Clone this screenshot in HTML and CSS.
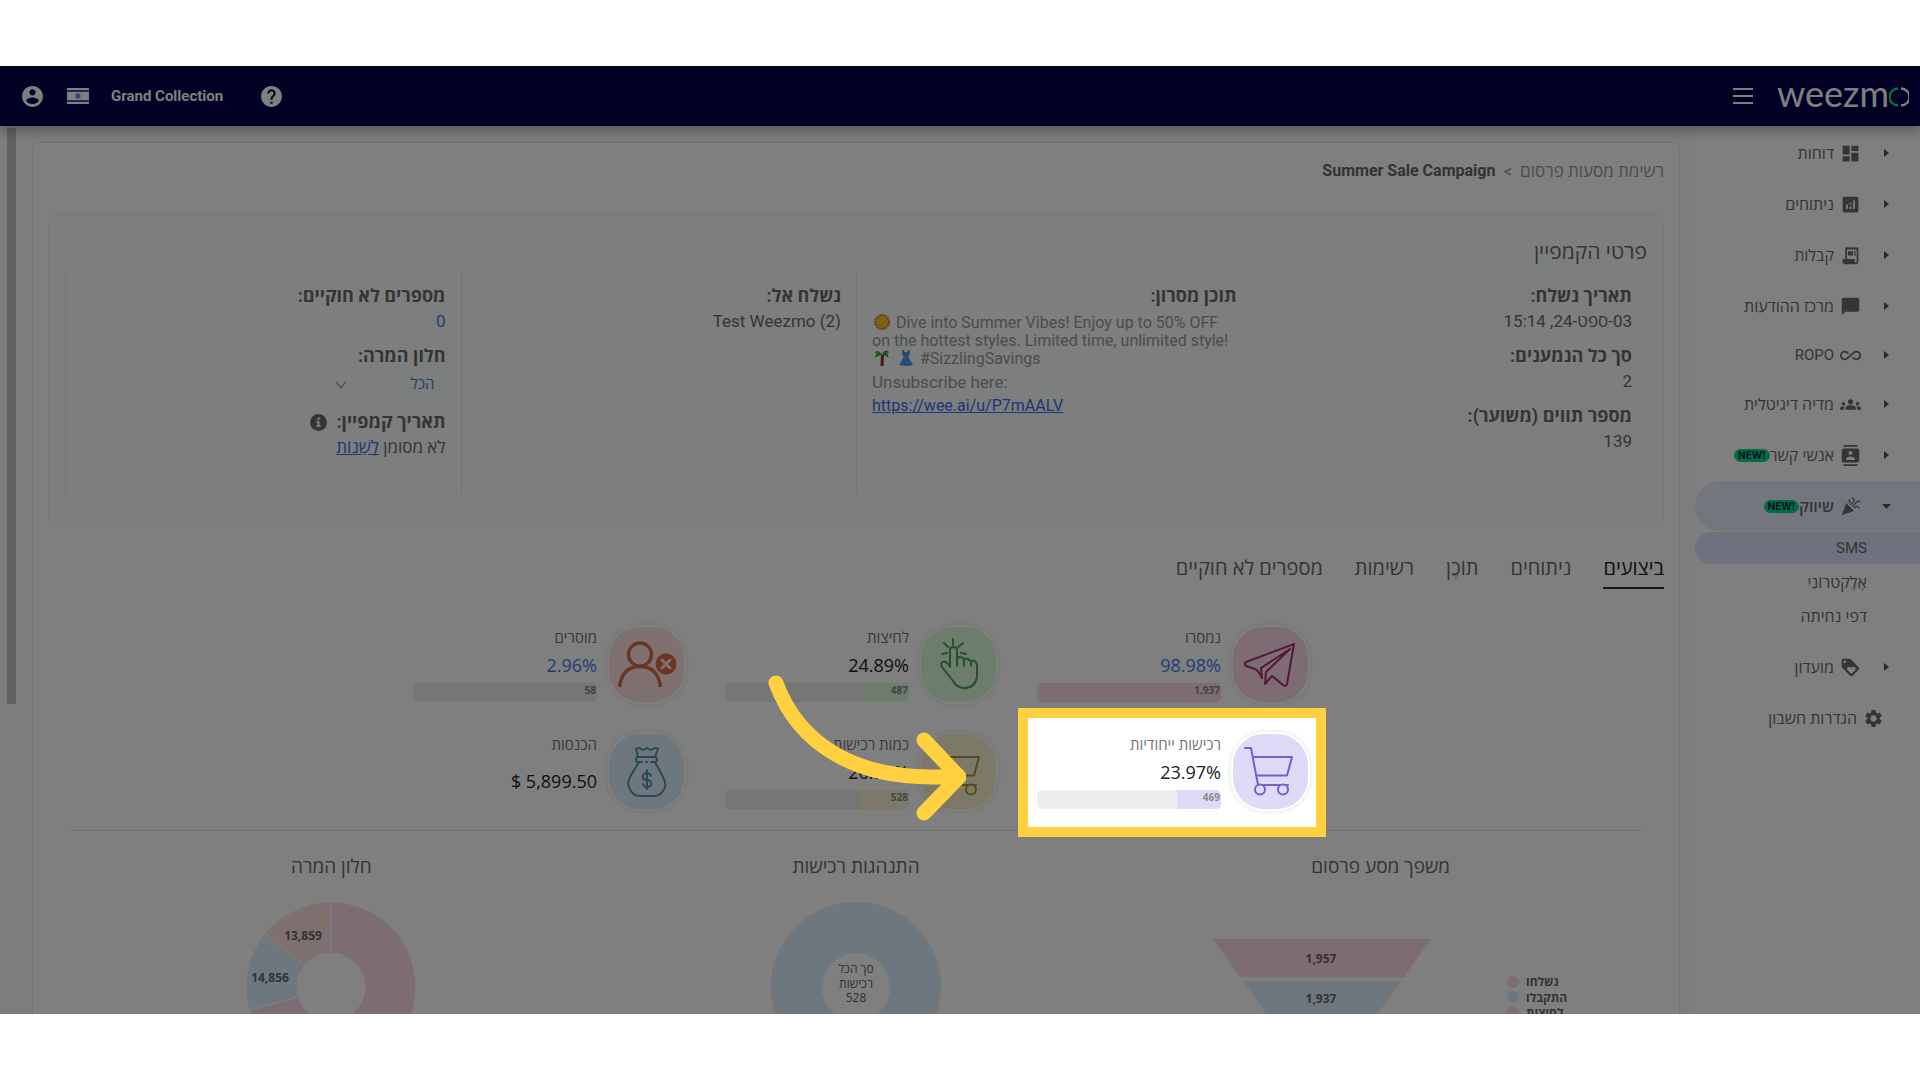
FILE: index.html
```html
<!DOCTYPE html>
<html lang="he" dir="rtl">
<head>
<meta charset="utf-8">
<meta name="viewport" content="width=device-width, initial-scale=1">
<title>Summer Sale Campaign</title>
<link rel="stylesheet" href="styles.css">
</head>
<body>
<div class="frame">
  <header class="topbar">
    <div class="brand">
      <a class="logo" href="#" dir="ltr">weezm<svg width="20" height="20" viewBox="0 0 20 20" fill="none" stroke-width="2.4"><path d="M9 1.5a8.5 8.5 0 0 0 0 17" stroke="#00e28a"/><path d="M12 1.5a8.5 8.5 0 0 1 0 17" stroke="#fff"/></svg></a>
      <button class="icon-btn" type="button" aria-label="תפריט"><svg width="20" height="16" viewBox="0 0 20 16" fill="currentColor"><path d="M0 0h20v2H0zM0 7h20v2H0zM0 14h20v2H0z"/></svg></button>
    </div>
    <div class="account" dir="ltr">
      <button class="icon-btn" type="button" aria-label="חשבון"><svg class="ic-lg" viewBox="0 0 24 24"><path d="M12 2C6.48 2 2 6.48 2 12s4.48 10 10 10 10-4.480 10-10S17.520 2 12 2zm0 3c1.660 0 3 1.340 3 3s-1.340 3-3 3-3-1.340-3-3 1.340-3 3-3zm0 14.200c-2.500 0-4.710-1.280-6-3.220.030-1.990 4-3.080 6-3.080 1.990 0 5.970 1.090 6 3.080-1.290 1.940-3.500 3.220-6 3.220z"/></svg></button>
      <svg class="flag" viewBox="0 0 22 16"><path fill="#fff" d="M0 0h22v16H0z"/><path fill="#2b50d8" d="M0 2h22v2H0zM0 12h22v2H0z"/><path d="M11 5.500l2.200 3.700H8.800zM11 10.500L8.800 6.800h4.400z" fill="none" stroke="#2b50d8" stroke-width=".8"/></svg>
      <span class="account-name">Grand Collection</span>
      <button class="icon-btn" type="button" aria-label="עזרה"><svg class="ic-lg" viewBox="0 0 24 24"><path d="M12 2C6.480 2 2 6.480 2 12s4.480 10 10 10 10-4.480 10-10S17.520 2 12 2zm1 17h-2v-2h2v2zm2.070-7.750l-.9.920C13.450 12.900 13 13.500 13 15h-2v-.5c0-1.100.45-2.100 1.170-2.830l1.240-1.260c.37-.36.59-.86.59-1.410 0-1.100-.9-2-2-2s-2 .9-2 2H8c0-2.210 1.790-4 4-4s4 1.790 4 4c0 .88-.36 1.680-.93 2.250z"/></svg></button>
    </div>
  </header>

  <div class="body">
    <nav class="sidebar">
      <a class="nav-item" href="#"><svg class="caret" viewBox="0 0 5 8"><path d="M0 0l5 4-5 4z"/></svg><svg class="ic" viewBox="0 0 24 24"><path d="M3 13h8V3H3v10zm0 8h8v-6H3v6zm10 0h8V11h-8v10zm0-18v6h8V3h-8z"/></svg><span>דוחות</span></a>
      <a class="nav-item" href="#"><svg class="caret" viewBox="0 0 5 8"><path d="M0 0l5 4-5 4z"/></svg><svg class="ic" viewBox="0 0 24 24"><path d="M19 3H5c-1.100 0-2 .9-2 2v14c0 1.100.9 2 2 2h14c1.100 0 2-.9 2-2V5c0-1.100-.9-2-2-2zM9 17H7v-5h2v5zm4 0h-2v-3h2v3zm0-5h-2v-2h2v2zm4 5h-2V7h2v10z"/></svg><span>ניתוחים</span></a>
      <a class="nav-item" href="#"><svg class="caret" viewBox="0 0 5 8"><path d="M0 0l5 4-5 4z"/></svg><svg class="ic" viewBox="0 0 24 24"><path d="M19.500 3.500 18 2l-1.500 1.500L15 2l-1.500 1.500L12 2l-1.500 1.500L9 2 7.500 3.500 6 2v14H3v3c0 1.660 1.340 3 3 3h12c1.660 0 3-1.340 3-3V2l-1.500 1.500zM19 19c0 .55-.45 1-1 1s-1-.45-1-1v-3H8V5h11v14zM9 7h6v5H9zM16 7h2v2h-2zM16 10h2v2h-2z"/></svg><span>קבלות</span></a>
      <a class="nav-item" href="#"><svg class="caret" viewBox="0 0 5 8"><path d="M0 0l5 4-5 4z"/></svg><svg class="ic" viewBox="0 0 24 24"><path d="M20 2H4c-1.100 0-2 .9-2 2v18l4-4h14c1.100 0 2-.9 2-2V4c0-1.100-.9-2-2-2z"/></svg><span>מרכז ההודעות</span></a>
      <a class="nav-item latin" href="#"><svg class="caret" viewBox="0 0 5 8"><path d="M0 0l5 4-5 4z"/></svg><svg class="ic" viewBox="0 0 24 24"><path d="M18.600 6.620c-1.440 0-2.800.56-3.770 1.530L7.800 14.390c-.64.64-1.490.99-2.400.99-1.870 0-3.390-1.510-3.390-3.380S3.530 8.620 5.400 8.620c.91 0 1.760.35 2.440 1.030l1.130 1 1.510-1.340L9.220 8.200C8.200 7.180 6.840 6.620 5.400 6.620 2.420 6.620 0 9.040 0 12s2.420 5.380 5.400 5.380c1.440 0 2.800-.56 3.770-1.530l7.030-6.240c.64-.64 1.490-.99 2.400-.99 1.870 0 3.390 1.510 3.390 3.380s-1.520 3.380-3.390 3.380c-.9 0-1.760-.35-2.440-1.030l-1.140-1.010-1.510 1.340 1.270 1.120c1.020 1.010 2.370 1.570 3.820 1.570 2.980 0 5.400-2.410 5.400-5.380s-2.420-5.370-5.400-5.370z"/></svg><span>ROPO</span></a>
      <a class="nav-item" href="#"><svg class="caret" viewBox="0 0 5 8"><path d="M0 0l5 4-5 4z"/></svg><svg class="ic" viewBox="0 0 24 24"><path d="M12 12.750c1.630 0 3.070.39 4.240.9 1.080.48 1.760 1.560 1.760 2.730V18H6v-1.610c0-1.180.68-2.260 1.760-2.730 1.170-.52 2.610-.91 4.240-.91zM4 13c1.100 0 2-.9 2-2s-.9-2-2-2-2 .9-2 2 .9 2 2 2zm1.130 1.100c-.37-.06-.74-.1-1.130-.1-.99 0-1.930.21-2.780.58C.48 14.900 0 15.620 0 16.430V18h4.500v-1.610c0-.83.23-1.610.63-2.290zM20 13c1.100 0 2-.9 2-2s-.9-2-2-2-2 .9-2 2 .9 2 2 2zm4 3.430c0-.81-.48-1.530-1.220-1.850-.85-.37-1.790-.58-2.780-.58-.39 0-.76.04-1.130.1.4.68.63 1.460.63 2.290V18H24v-1.570zM12 6c1.660 0 3 1.340 3 3s-1.340 3-3 3-3-1.340-3-3 1.340-3 3-3z"/></svg><span>מדיה דיגיטלית</span></a>
      <a class="nav-item" href="#"><svg class="caret" viewBox="0 0 5 8"><path d="M0 0l5 4-5 4z"/></svg><svg class="ic" viewBox="0 0 24 24"><path d="M20 0H4v2h16V0zM4 24h16v-2H4v2zM20 4H4c-1.100 0-2 .9-2 2v12c0 1.100.9 2 2 2h16c1.100 0 2-.9 2-2V6c0-1.100-.9-2-2-2zm-8 2.750c1.240 0 2.250 1.010 2.250 2.250s-1.010 2.250-2.250 2.250S9.750 10.240 9.750 9 10.760 6.750 12 6.750zM17 17H7v-1.500c0-1.670 3.330-2.500 5-2.500s5 .83 5 2.500V17z"/></svg><span>אנשי קשר</span><b class="new" dir="ltr">NEW!</b></a>
      <a class="nav-item active" href="#"><svg class="caret open" viewBox="0 0 9 5"><path d="M0 0h9L4.500 5z"/></svg><svg class="ic" viewBox="0 0 24 24"><path d="M2 22l14-5-9-9zM14.530 12.530l5.590-5.590c.49-.49 1.280-.49 1.770 0l.59.59 1.060-1.060-.59-.59c-1.070-1.070-2.820-1.070-3.890 0l-5.590 5.590 1.060 1.060zM10.060 6.880l-.59.59 1.060 1.060.59-.59c1.070-1.070 1.070-2.820 0-3.890l-.59-.59-1.060 1.070.59.59c.48.48.48 1.280 0 1.760zM17.060 11.880l-1.590 1.590 1.060 1.060 1.590-1.590c.49-.49 1.280-.49 1.770 0l1.610 1.610 1.060-1.060-1.610-1.610c-1.080-1.070-2.820-1.070-3.900 0zM15.060 5.880l-3.590 3.590 1.060 1.060 3.590-3.590c1.070-1.070 1.070-2.820 0-3.890l-1.590-1.590-1.060 1.060 1.590 1.590c.48.49.48 1.290 0 1.770z"/></svg><span>שיווק</span><b class="new" dir="ltr">NEW!</b></a>
      <div class="subnav">
        <a class="current" href="#">SMS</a>
        <a href="#">אֶלֶקטרוֹנִי</a>
        <a href="#">דפי נחיתה</a>
      </div>
      <a class="nav-item" href="#"><svg class="caret" viewBox="0 0 5 8"><path d="M0 0l5 4-5 4z"/></svg><svg class="ic" viewBox="0 0 24 24"><path d="M21.410 11.580l-9-9C12.050 2.220 11.550 2 11 2H4c-1.100 0-2 .9-2 2v7c0 .55.22 1.050.59 1.420l9 9c.36.36.86.58 1.410.58.55 0 1.050-.22 1.410-.59l7-7c.37-.36.59-.86.59-1.410 0-.55-.23-1.060-.59-1.420zM5.500 7C4.670 7 4 6.330 4 5.500S4.670 4 5.500 4 7 4.670 7 5.500 6.330 7 5.500 7zm11.770 8.270L13 19.540l-4.270-4.270C8.280 14.810 8 14.190 8 13.500c0-1.380 1.120-2.500 2.500-2.500.69 0 1.320.28 1.770.74l.73.72.73-.73c.45-.45 1.080-.73 1.770-.73 1.380 0 2.500 1.120 2.500 2.500 0 .69-.28 1.320-.73 1.770z"/></svg><span>מועדון</span></a>
      <a class="nav-item leaf" href="#"><svg class="ic" viewBox="0 0 24 24"><path d="M19.140 12.940c.04-.3.06-.61.06-.94 0-.32-.02-.64-.07-.94l2.030-1.580c.18-.14.23-.41.12-.61l-1.920-3.320c-.12-.22-.37-.29-.59-.22l-2.390.96c-.5-.38-1.030-.7-1.620-.94l-.36-2.540c-.04-.24-.24-.41-.48-.41h-3.840c-.24 0-.43.17-.47.41l-.36 2.540c-.59.24-1.130.57-1.620.94l-2.390-.96c-.22-.08-.47 0-.59.22L2.740 8.870c-.12.21-.08.47.12.61l2.030 1.580c-.05.3-.09.63-.09.94s.02.64.07.94l-2.030 1.580c-.18.14-.23.41-.12.61l1.920 3.320c.12.22.37.29.59.22l2.390-.96c.5.38 1.030.7 1.620.94l.36 2.540c.05.24.24.41.48.41h3.840c.24 0 .44-.17.47-.41l.36-2.540c.59-.24 1.130-.56 1.620-.94l2.390.96c.22.08.47 0 .59-.22l1.920-3.320c.12-.22.07-.47-.12-.61l-2.010-1.580zM12 15.600c-1.980 0-3.600-1.620-3.600-3.600s1.620-3.600 3.600-3.600 3.600 1.620 3.600 3.600-1.620 3.600-3.600 3.600z"/></svg><span>הגדרות חשבון</span></a>
    </nav>

    <main class="main">
      <div class="card">
        <div class="crumbs"><a href="#">רשימת מסעות פרסום</a><span>&gt;</span><strong>Summer Sale Campaign</strong></div>

        <section class="details">
          <h2>פרטי הקמפיין</h2>
          <div class="details-grid">
            <dl>
              <dt>תאריך נשלח:</dt><dd>03-ספט-24, 15:14</dd>
              <dt>סך כל הנמענים:</dt><dd>2</dd>
              <dt>מספר תווים (משוער):</dt><dd>139</dd>
            </dl>
            <dl class="ruled">
              <dt>תוכן מסרון:</dt>
              <dd class="message" dir="ltr">
                <p><svg class="emoji" viewBox="0 0 16 16"><circle cx="8" cy="8" r="7" fill="#f5b020" stroke="#e8722c" stroke-width="2" stroke-dasharray="2 1"/><circle cx="8" cy="8" r="6" fill="#fbbf2d"/></svg> Dive into Summer Vibes! Enjoy up to 50% OFF<br>on the hottest styles. Limited time, unlimited style!<br><svg class="emoji" viewBox="0 0 16 16"><path d="M7 5h3l-.5 11h-3z" fill="#7a3b22"/><path d="M8 5C5-1 1 1 1 3l3-.5C1 4 1 7 2 8c1-2 3-3 6-3 3 0 5 1 6 3 1-2 0-4-2-5.500l3 .5C14 0 10-1 8 5z" fill="#3f9b32"/></svg> <svg class="emoji" viewBox="0 0 16 16"><path d="M4 0h2l.5 2h3L10 0h2v3l-1.500 4L15 15q-7 2-14 0l4.500-8L4 3z" fill="#4a9bea"/></svg> #SizzlingSavings</p>
                <p class="unsub">Unsubscribe here:</p>
                <a href="#">https://wee.ai/u/P7mAALV</a>
              </dd>
            </dl>
            <dl class="ruled">
              <dt>נשלח אל:</dt><dd dir="ltr">Test Weezmo (2)</dd>
            </dl>
            <dl class="ruled">
              <dt>מספרים לא חוקיים:</dt><dd class="blue">0</dd>
              <dt><label for="window">חלון המרה:</label></dt>
              <dd class="select-box"><select id="window"><option>הכל</option></select><svg width="10" height="8" viewBox="0 0 10 8" fill="none" stroke="#a0a0a0" stroke-width="1.300"><path d="M0 .5l5 6.500 5-6.500"/></svg></dd>
              <dt>תאריך קמפיין: <svg class="info" viewBox="0 0 17 17"><circle cx="8.500" cy="8.500" r="8.500" fill="#6a6a6a"/><path d="M7.300 3.500h2.400v2.200H7.300zM6.300 7h3.300v4.500h1.200V13H6.300v-1.500h1V8.500h-1z" fill="#fff"/></svg></dt>
              <dd>לא מסומן <a href="#">לְשַׁנוֹת</a></dd>
            </dl>
          </div>
        </section>

        <div class="tabs" role="tablist">
          <button type="button" role="tab" aria-selected="true">ביצועים</button>
          <button type="button" role="tab">ניתוחים</button>
          <button type="button" role="tab">תוֹכֶן</button>
          <button type="button" role="tab">רשימות</button>
          <button type="button" role="tab">מספרים לא חוקיים</button>
        </div>

        <section class="kpis">
          <article class="kpi pink">
            <svg class="badge" viewBox="0 0 75 75"><path d="M61 17 13 35q-2 2 0 4l9 3q4 2 7 9l-1-10 29-19-24 23-1 12 7-8 11 9q3 2 4-1z"/></svg>
            <div class="kpi-text"><h3>נמסרו</h3><p class="blue">98.98%</p><div class="bar"><i style="width:99%"></i><b>1,937</b></div></div>
          </article>
          <article class="kpi green">
            <svg class="badge" viewBox="0 0 75 75"><path d="M32 12v6M23 16l4 4M42 16l-5 4M21 27l5-1M45 27l-5-1M29 39V23q0-3 3.500-3t3.500 3v16M36 33q0-3 3-3t4 3v6M43 33q2-2 4-1t3 3v4M50 34q6-1 6 5v11q-2 11-13 11-7 0-11-7L21 40q-2-4 1-5 4-1 7 5"/></svg>
            <div class="kpi-text"><h3>לחיצות</h3><p>24.89%</p><div class="bar"><i style="width:25%"></i><b>487</b></div></div>
          </article>
          <article class="kpi red">
            <svg class="badge" viewBox="0 0 75 75"><g stroke-width="3.500" stroke-linecap="butt"><circle cx="31" cy="27.500" r="11.500"/><path d="M10.500 60Q13 39.500 31 39.500T51.500 60"/></g><circle cx="57" cy="37" r="10.500" fill="#d8694a" stroke="none"/><path d="M53 33l8 8m0-8l-8 8" stroke="#fce2e0" stroke-width="3"/></svg>
            <div class="kpi-text"><h3>מוסרים</h3><p class="blue">2.96%</p><div class="bar"><i style="width:3%"></i><b>58</b></div></div>
          </article>
          <article class="kpi lilac">
            <svg class="badge" viewBox="0 0 75 75"><path d="M12 14h6l7 37M20 23h39l-5 18.500H23M25 51h30"/><circle cx="27" cy="55.500" r="5" fill="#e0daf9"/><circle cx="50" cy="55.500" r="5" fill="#e0daf9"/></svg>
            <div class="kpi-text"><h3>רכישות ייחודיות</h3><p>23.97%</p><div class="bar"><i style="width:24%"></i><b>469</b></div></div>
            <div class="spotlight"></div>
          </article>
          <article class="kpi yellow">
            <svg class="badge" viewBox="0 0 75 75"><path d="M12 14h6l7 37M20 23h38l-5 18.500H23M25 51h30"/><circle cx="27" cy="55.500" r="5" fill="#f8f3d0"/><circle cx="50" cy="55.500" r="5" fill="#f8f3d0"/></svg>
            <div class="kpi-text"><h3>כמות רכישות</h3><p>26.98%</p><div class="bar"><i style="width:27%"></i><b>528</b></div></div>
            <svg class="arrow" width="200" height="150" viewBox="0 0 200 150" fill="none" stroke="#ffd040" stroke-width="15" stroke-linecap="round" stroke-linejoin="round"><path d="M10 10C31 67 86 111 190 103M158 67l35 37-35 36"/></svg>
          </article>
          <article class="kpi sky">
            <svg class="badge" viewBox="0 0 75 75"><path d="M29 23l-2-8q3-2 5 0 3 2 6-1 3 3 6 1 3-2 5 0l-3 8M29 23h17q2 0 2 2.500T46 28M29 23q-2 0-2 2.500t2 2.500h4M42 28h4M37 28h1M30 28 21 43q-3 6-1 10 3 9 11 9h14q8 0 11-9 1-4-2-10L46 28M42 42q-1-3-4-3-4 0-4 3.500t4 3.500 4 3.500-4 3.500q-3 0-4-3M38 36v19"/></svg>
            <div class="kpi-text"><h3>הכנסות</h3><p class="tall" dir="ltr">$ 5,899.50</p></div>
          </article>
        </section>

        <section class="charts">
          <figure>
            <figcaption>משפך מסע פרסום</figcaption>
            <svg width="400" height="220" viewBox="0 0 400 220" direction="ltr">
              <path fill="#fcd8e8" d="M32 37h218l-27 38H59z"/><path fill="#daeefa" d="M62 79h158l-30 42H92z"/><path fill="#fce2e0" d="M95 125h92l-30 42h-32z"/>
              <g class="num" text-anchor="middle"><text x="140" y="61">1,957</text><text x="140" y="101">1,937</text></g>
              <circle cx="332" cy="80" r="6" fill="#fcd8e8"/><circle cx="332" cy="95" r="6" fill="#daeefa"/><circle cx="332" cy="110" r="6" fill="#fce2e0"/>
              <g class="num"><text x="345" y="84">נשלחו</text><text x="345" y="100">התקבלו</text><text x="345" y="115">לחיצות</text></g>
            </svg>
          </figure>
          <figure>
            <figcaption>התנהגות רכישות</figcaption>
            <svg width="170" height="220" viewBox="0 0 170 220" direction="ltr">
              <circle cx="85" cy="85" r="59.500" fill="none" stroke="#daeefa" stroke-width="51"/>
              <g class="mid" text-anchor="middle"><text x="85" y="71">סך הכל</text><text x="85" y="86">רכישות</text><text x="85" y="100">528</text></g>
            </svg>
          </figure>
          <figure>
            <figcaption>חלון המרה</figcaption>
            <svg width="170" height="220" viewBox="0 0 170 220" direction="ltr">
              <g stroke="#fff"><path fill="#fcd8e8" d="M85 0A85 85 0 1 1 3.300 108.600L52.300 94.500A34 34 0 1 0 85 51z"/><path fill="#daeefa" d="M3.300 108.600A85 85 0 0 1 19 31.500L58.600 63.600A34 34 0 0 0 52.300 94.500z"/><path fill="#fce2e0" d="M19 31.500A85 85 0 0 1 85 0V51A34 34 0 0 0 58.600 63.600z"/></g>
              <g class="num" text-anchor="middle"><text x="57" y="38">13,859</text><text x="24" y="80">14,856</text></g>
            </svg>
          </figure>
        </section>
      </div>
    </main>
    <div class="scroll"><div class="thumb"></div></div>
  </div>
</div>
</body>
</html>
```
FILE: styles.css
```css
* { box-sizing: border-box; }
body, h2, h3, p, dl, dd, figure { margin: 0; }
body {
  background: #fff;
  padding: 66px 0;
  font: 15px/20px Roboto, "Open Sans", "Noto Sans", sans-serif;
  color: #6a6a6a;
}
button, select { font: inherit; border: 0; background: none; padding: 0; color: inherit; }
a { color: inherit; text-decoration: none; }
svg { display: block; flex: none; }

.frame {
  position: relative;
  display: flex;
  flex-direction: column;
  height: calc(100vh - 132px);
  overflow: hidden;
}

.topbar {
  display: flex;
  justify-content: space-between;
  align-items: center;
  flex: none;
  height: 60px;
  padding: 0 11px 0 20px;
  background: #05004b;
  color: #fff;
  box-shadow: 0 4px 12px rgba(0, 0, 0, .35);
  position: relative;
}
.brand { display: flex; align-items: center; gap: 24px; }
.logo { display: flex; align-items: center; padding-bottom: 6px; font: 400 36px/40px Lato, sans-serif; }
.logo svg { margin-top: 8px; }
.account { display: flex; align-items: center; }
.account-name { font-weight: 700; font-size: 15px; margin: 0 36px 0 22px; }
.flag { width: 22px; height: 16px; margin-left: 22px; }
.ic-lg { width: 25px; height: 25px; fill: currentColor; }

.body { display: flex; flex: 1; min-height: 0; background: #f9fcfb; }

.sidebar {
  flex: none;
  width: 225px;
  display: flex;
  flex-direction: column;
  gap: 1px;
  padding-top: 2px;
  background: #fff;
  font-family: "Open Sans", sans-serif;
  font-size: 16px;
}
.nav-item {
  display: flex;
  align-items: center;
  flex: none;
  height: 50px;
  padding-right: 31px;
  border-radius: 25px 0 0 25px;
}
.nav-item.latin { height: 46px; font-family: Roboto, sans-serif; font-size: 15px; }
.nav-item.leaf { padding-right: 36px; }
.nav-item.active { background: #e6edfa; font-weight: 600; }
.nav-item span { margin-right: 6px; }
.caret { width: 5px; height: 8px; fill: #555; margin-left: 23px; }
.caret.open { width: 9px; height: 5px; margin-right: -2px; margin-left: 21px; }
.ic { width: 21px; height: 21px; fill: #6a6a6a; }
.new {
  background: #00dc82;
  color: #05204b;
  border-radius: 7px;
  font: 700 10px/13px Inter, sans-serif;
  padding: 0 4px;
}
.subnav { display: flex; flex-direction: column; gap: 2px; padding-bottom: 9px; }
.subnav a { line-height: 32px; padding-right: 53px; border-radius: 16px 0 0 16px; }
.subnav .current { background: #dce4fc; font-family: Roboto, sans-serif; font-size: 15px; }

.main { flex: 1; min-width: 0; padding: 16px 15px 0 16px; }
.card {
  min-height: 100%;
  padding: 16px 15px;
  background: #fff;
  border: 1px solid #e0e6e6;
  border-radius: 8px;
}
.scroll { flex: none; width: 16px; padding: 2px 0 0 1px; }
.thumb { width: 9px; height: 65%; background: #c2c5c4; }

.crumbs { display: flex; gap: 8px; font-size: 17px; line-height: 24px; color: #999; }
.crumbs strong { color: #666; font-size: 16px; }

.details {
  margin-top: 32px;
  padding: 17px 16px 31px;
  background: #fafdfc;
  border: 1px solid #f0f4f4;
  border-radius: 8px;
}
.details h2 { font: 400 21px/36px "Open Sans", sans-serif; }
.details-grid { display: grid; grid-template-columns: repeat(4, 1fr); min-height: 225px; }
.details dl { padding: 14px 15px 0; font-size: 17px; }
.details dl.ruled { border-left: 1px solid #e6eaea; }
dt { display: flex; align-items: center; gap: 10px; font-weight: 700; font-size: 18px; line-height: 26px; }
dd { line-height: 24px; margin-bottom: 10px; text-align: right; }
.details dd a { color: #3a6df0; text-decoration: underline; }
.message { padding-top: 5px; font-size: 16px; color: #999; text-align: left; }
.message p { line-height: 18px; }
.message .unsub { line-height: 24px; font-size: 17px; margin-top: 2px; }
.details .message a { font-size: 16px; }
.emoji { display: inline-block; width: 16px; height: 16px; vertical-align: -2px; margin: 0 2px; }
.info { width: 17px; height: 17px; }
.blue { color: #4a78e8; }
.select-box { position: relative; width: 120px; height: 30px; }
.select-box select { width: 100%; height: 30px; padding: 0 11px; appearance: none; color: #4a78e8; font-size: 15px; }
.select-box svg { position: absolute; left: 10px; top: 12px; }

.tabs { display: flex; gap: 32px; margin-top: 24px; }
.tabs button { font: 400 20px/30px "Open Sans", sans-serif; padding: 3px 0 4px; border-bottom: 2px solid transparent; }
.tabs [aria-selected] { color: #222; border-color: #333; }

.kpis {
  display: grid;
  grid-template-columns: repeat(3, 312px);
  justify-content: center;
  row-gap: 32px;
  margin: 38px 21px 0;
  padding-bottom: 21px;
  border-bottom: 1px solid #e3e5e6;
}
.kpi { position: relative; display: flex; gap: 12px; padding: 0 16px 0 25px; }
.badge {
  width: 75px;
  height: 75px;
  border-radius: 31px;
  background: var(--tint);
  box-shadow: 0 0 0 2px #fff, 0 0 4px 3px #e4eee4;
  fill: none;
  stroke: var(--ink);
  stroke-width: 2;
  stroke-linecap: round;
  stroke-linejoin: round;
}
.kpi-text { flex: 1; display: flex; flex-direction: column; }
.kpi h3 { margin: 0; font: 400 15px/20px "Open Sans", sans-serif; color: #757575; }
.kpi p { font: 400 18px/36px "Open Sans", sans-serif; color: #222; }
.kpi p.blue { color: #4a78e8; }
.kpi p.tall { line-height: 55px; text-align: right; }
.bar { display: grid; height: 19px; border-radius: 5px; background: #ecedef; overflow: hidden; }
.bar i, .bar b { grid-area: 1 / 1; }
.bar i { background: var(--tint); }
.bar b { font: 700 10px/15px "Open Sans", sans-serif; color: #888; padding-right: 1px; }
.pink { --tint: #fcd8e8; --ink: #a83064; }
.green { --tint: #d8f8da; --ink: #4fa055; }
.red { --tint: #fce2e0; --ink: #d8694a; }
.lilac { --tint: #e0daf9; --ink: #7260cc; }
.yellow { --tint: #f8f3d0; --ink: #a89838; }
.sky { --tint: #daeefa; --ink: #5a90a8; }

/* Guided-tour highlight: dims everything outside the box */
.spotlight {
  position: absolute;
  inset: -26px -2px -28px 6px;
  border: 10px solid #ffd040;
  box-shadow: 0 0 0 200vmax rgba(0, 0, 0, .5);
  z-index: 5;
}
.arrow { position: absolute; left: 66px; top: -61px; z-index: 6; }

.charts { display: grid; grid-template-columns: repeat(3, 1fr); margin: 20px 21px 0; }
figure { display: flex; flex-direction: column; align-items: center; gap: 21px; }
figcaption { font: 400 19px/30px "Open Sans", sans-serif; }
.num { font: 700 12px "Open Sans", sans-serif; fill: #666; }
.mid { font: 400 12px "Open Sans", sans-serif; fill: #666; }
```
